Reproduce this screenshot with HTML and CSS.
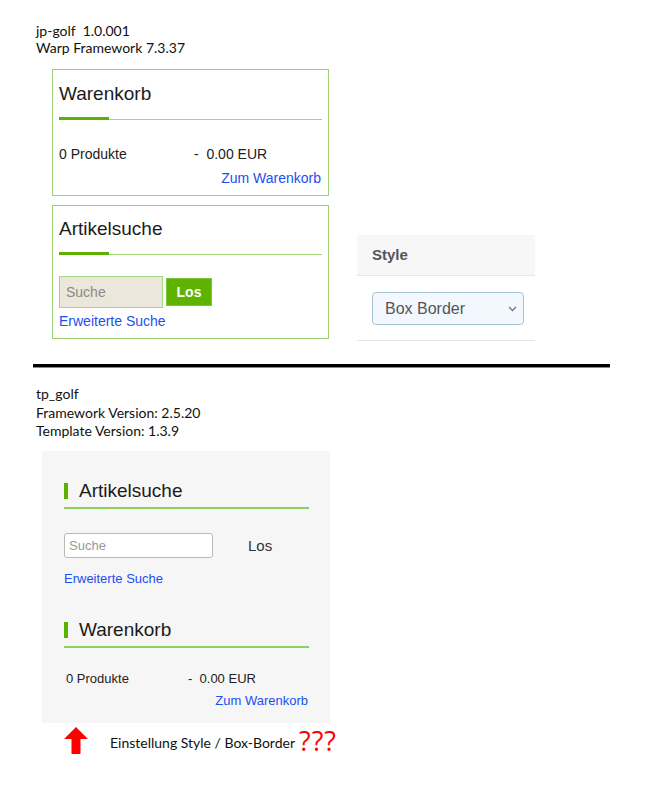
FILE: index.html
```html
<!DOCTYPE html>
<html lang="de">
<head>
<meta charset="utf-8">
<title>jp-golf vs tp_golf</title>
<link rel="stylesheet" href="styles.css">
</head>
<body>
<div class="page">
  <div class="meta meta-top">
    <div>jp-golf&nbsp; 1.0.001</div>
    <div>Warp Framework 7.3.37</div>
  </div>

  <div class="top-row">
    <div class="boxes">
      <div class="box box-cart">
        <h3 class="box-title">Warenkorb</h3>
        <div class="rule"></div>
        <div class="cart-row"><span class="cart-count">0 Produkte</span><span>-&nbsp; 0.00 EUR</span></div>
        <div class="cart-link"><a href="#">Zum Warenkorb</a></div>
      </div>
      <div class="box box-search">
        <h3 class="box-title">Artikelsuche</h3>
        <div class="rule"></div>
        <div class="search-row">
          <input class="search-input" type="text" placeholder="Suche">
          <button class="search-btn">Los</button>
        </div>
        <a class="adv-link" href="#">Erweiterte Suche</a>
      </div>
    </div>

    <div class="style-panel">
      <div class="style-head">Style</div>
      <div class="style-body">
        <div class="fake-select">
          <span>Box Border</span>
          <svg class="chev" width="9" height="6" viewBox="0 0 9 6"><path d="M1 1l3.5 3.5L8 1" fill="none" stroke="#777" stroke-width="1.3"/></svg>
        </div>
      </div>
    </div>
  </div>

  <div class="divider"></div>

  <div class="meta meta-bottom">
    <div>tp_golf</div>
    <div>Framework Version: 2.5.20</div>
    <div>Template Version: 1.3.9</div>
  </div>

  <div class="sidebar">
    <h3 class="side-title">Artikelsuche</h3>
    <div class="side-search">
      <input class="side-input" type="text" placeholder="Suche">
      <span class="side-los">Los</span>
    </div>
    <a class="side-link" href="#">Erweiterte Suche</a>

    <h3 class="side-title side-title-cart">Warenkorb</h3>
    <div class="side-cart-row"><span class="side-count">0 Produkte</span><span>-&nbsp; 0.00 EUR</span></div>
    <div class="side-cart-link"><a href="#">Zum Warenkorb</a></div>
  </div>

  <div class="note">
    <svg class="arrow" width="24" height="27" viewBox="0 0 24 27"><path d="M12 0L24 12H16.5V27H7.5V12H0Z" fill="#ff0000"/></svg>
    <span class="note-text">Einstellung Style / Box-Border</span>
    <span class="note-q">???</span>
  </div>
</div>
</body>
</html>
```

FILE: styles.css
```css
* { box-sizing: border-box; }
html, body { margin: 0; padding: 0; background: #fff; }
body { font-family: "Liberation Sans", Arial, sans-serif; color: #222; }
a { color: #1c4ff0; text-decoration: none; }

.page { padding: 22px 0 0 36px; width: 649px; }

.meta { font-family: Lato, "Open Sans", sans-serif; font-size: 14px; color: #111; }
.meta-top { line-height: 17px; }
.meta-bottom { line-height: 18.5px; }

.top-row { display: flex; margin-left: 16px; margin-top: 13px; }
.boxes { display: flex; flex-direction: column; gap: 9px; width: 277px; }

.box { border: 1px solid #9ed274; padding: 12px 6px 4px 6px; }
.box-title { margin: 0; font-weight: normal; font-size: 19px; line-height: 24px; color: #1b1b1b; }
.rule {
  height: 3px; margin-top: 11px;
  background:
    linear-gradient(#5cb000, #5cb000) left top / 50px 3px no-repeat,
    linear-gradient(#a3d97c, #a3d97c) left bottom / 100% 1px no-repeat;
}
.box-cart { height: 127px; }
.cart-row { margin-top: 22px; font-size: 14px; line-height: 24px; display: flex; }
.cart-count { width: 135px; }
.cart-link { text-align: right; font-size: 14px; line-height: 24px; padding-right: 1px; }

.box-search { height: 134px; padding-top: 11px; }
.search-row { display: flex; align-items: center; gap: 3px; margin-top: 21px; }
.search-input {
  width: 104px; height: 32px; margin: 0; padding: 0 6px;
  border: 1px solid #a3d780; background: #ebe7da;
  font-family: "Liberation Sans", Arial, sans-serif; font-size: 14px; color: #333;
  outline: none; border-radius: 0;
}
.search-input::placeholder { color: #8a8a8a; }
.search-btn {
  width: 46px; height: 28px; border: 1px solid #7cc23a; background: #5db300; color: #fff;
  font-family: "Liberation Sans", Arial, sans-serif; font-size: 14px; font-weight: bold; padding: 0; border-radius: 0;
}
.adv-link { display: block; font-size: 14px; line-height: 18px; margin-top: 4px; }

.style-panel { width: 178px; margin-left: 28px; margin-top: 166px; height: 106px; border-bottom: 1px solid #e6e6e6; }
.style-head {
  height: 41px; background: #f7f7f7; border-bottom: 1px solid #e6e6e6;
  padding-left: 15px; font-weight: bold; font-size: 15px; color: #555; line-height: 40px;
}
.style-body { padding: 16px 12px 0 15px; }
.fake-select {
  height: 33px; width: 152px; border: 1px solid #a7c3d6; border-radius: 4px; background: #f2f8fd;
  display: flex; align-items: center; justify-content: space-between; padding: 0 6px 0 12px;
  font-size: 16px; color: #555;
}
.chev { margin-top: 1px; }

.divider { width: 577px; height: 3px; background: #000; margin: 23px 0 0 -3px; box-shadow: 0 1px 0 #888; }

.meta-bottom { margin-top: 18px; }

.sidebar { width: 288px; margin: 10px 0 0 6px; background: #f6f6f6; padding: 28px 21px 18px 22px; height: 272px; }
.side-title {
  margin: 0; font-weight: normal; font-size: 19px; line-height: 24px; color: #1b1b1b;
  display: flex; align-items: center; padding-bottom: 4px; border-bottom: 2px solid #8dd05c;
}
.side-title::before { content: ""; width: 4px; height: 16px; background: #5cb000; margin-right: 11px; }
.side-search { display: flex; align-items: center; margin-top: 24px; }
.side-input {
  width: 149px; height: 25px; margin: 0; padding: 0 4px;
  border: 1px solid #b9b9b9; border-radius: 3px; background: #fff;
  font-family: "Liberation Sans", Arial, sans-serif; font-size: 13px; outline: none;
}
.side-input::placeholder { color: #999; }
.side-los { margin-left: 35px; font-size: 15px; color: #333; }
.side-link { display: block; margin-top: 13px; font-size: 13px; line-height: 16px; }
.side-title-cart { margin-top: 31px; }
.side-cart-row { display: flex; margin-top: 20px; font-size: 13px; line-height: 22px; padding-left: 2px; color: #222; }
.side-count { width: 122px; }
.side-cart-link { text-align: right; font-size: 13px; line-height: 22px; padding-right: 1px; }

.note { display: flex; align-items: center; margin: 3px 0 0 28px; height: 30px; }
.arrow { flex: none; }
.note-text { margin-left: 22px; font-family: Lato, "Open Sans", sans-serif; font-size: 14px; color: #111; margin-top: 3px; }
.note-q { margin-left: 4px; font-family: "Open Sans", sans-serif; font-size: 27px; color: #f00; line-height: 30px; letter-spacing: 1px; }
```
